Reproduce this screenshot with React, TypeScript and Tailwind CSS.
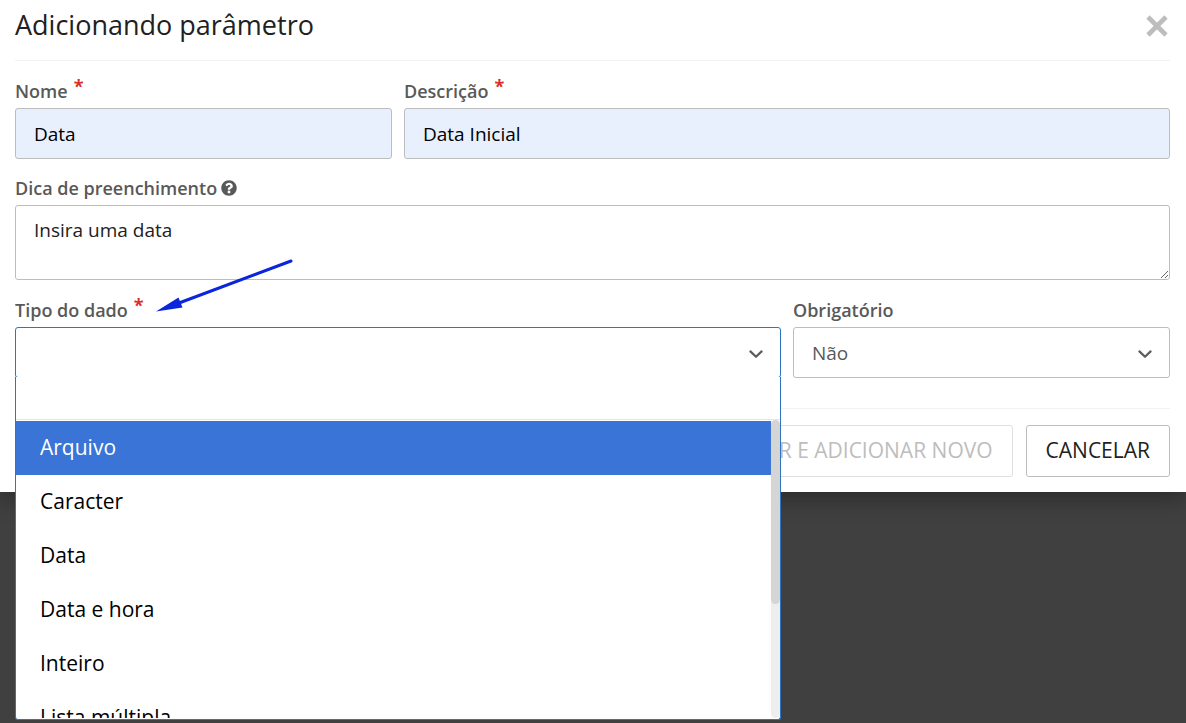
import { useState, type ReactNode } from "react";
import { FaQuestionCircle } from "react-icons/fa";

const dataTypes = [
  "Arquivo",
  "Caracter",
  "Data",
  "Data e hora",
  "Inteiro",
  "Lista múltipla",
];

function Required() {
  return (
    <span className="relative -top-[5px] ml-1.5 text-lg leading-none font-bold text-[#d9302c]">*</span>
  );
}

function Label({ htmlFor, children }: { htmlFor: string; children: ReactNode }) {
  return (
    <label
      htmlFor={htmlFor}
      className="flex h-[34px] items-center text-lg font-semibold text-[#595959]"
    >
      {children}
    </label>
  );
}

function Chevron() {
  return (
    <svg
      className="pointer-events-none absolute top-[22px] right-[17px] h-2.5 w-4"
      viewBox="0 0 16 10"
      fill="none"
      stroke="#5c5c5c"
      strokeWidth="2.2"
      strokeLinecap="round"
      strokeLinejoin="round"
      aria-hidden="true"
    >
      <path d="M2.4 2.4 8 7.8 13.6 2.4" />
    </svg>
  );
}

const fieldClass =
  "block h-[51px] w-full rounded-[3px] border border-[#bdbdbd] px-[18px] text-[19px] outline-none";

function DataTypeField() {
  const [open, setOpen] = useState(true);
  const [value, setValue] = useState("");
  const [filter, setFilter] = useState("");
  const items = dataTypes.filter((t) => t.toLowerCase().includes(filter.toLowerCase()));

  return (
    <div className="relative">
      <button
        id="tipo"
        type="button"
        role="combobox"
        aria-haspopup="listbox"
        aria-expanded={open}
        aria-controls="tipo-lista"
        onClick={() => setOpen(!open)}
        className="block h-[51px] w-full rounded-[3px] border border-[#2f74c0] bg-white px-[18px] text-left text-[19px] text-[#595959] outline-none"
      >
        {value}
      </button>
      <Chevron />
      {open && (
        <div className="absolute inset-x-0 top-[50px] z-10 rounded-b-[3px] border border-t-0 border-[#2f74c0] bg-white">
          <input
            type="text"
            aria-label="Filtrar"
            value={filter}
            onChange={(e) => setFilter(e.target.value)}
            className="block h-[43px] w-full border-b border-[#e6e6e6] px-6 text-[19px] outline-none"
          />
          <div className="flex h-[299px] pb-px">
            <ul
              id="tipo-lista"
              role="listbox"
              aria-label="Tipo do dado"
              className="flex-1 overflow-hidden pt-px"
            >
              {items.map((t, i) => (
                <li
                  key={t}
                  role="option"
                  aria-selected={i === 0}
                  onClick={() => {
                    setValue(t);
                    setOpen(false);
                  }}
                  className="flex h-[54px] cursor-pointer items-center px-6 text-[21px] text-black aria-selected:bg-[#3974d6] aria-selected:text-white"
                >
                  {t}
                </li>
              ))}
            </ul>
            <div className="w-[9px] rounded-full bg-[#eeeeee]">
              <div className="h-[184px] rounded-full bg-[#d5d5d5]" />
            </div>
          </div>
        </div>
      )}
    </div>
  );
}

function Arrow() {
  return (
    <svg
      className="pointer-events-none absolute bottom-[15px] left-[140px] h-[54px] w-[140px]"
      viewBox="0 0 140 54"
      aria-hidden="true"
    >
      <path d="M136 3 24 45" stroke="#0a25dc" strokeWidth="3" strokeLinecap="round" />
      <path d="M1 53.5 23.5 39.5 27.5 49.5Z" fill="#0a25dc" />
    </svg>
  );
}

export default function App() {
  return (
    <main className="min-h-screen bg-[#404040] font-['Open_Sans',sans-serif]">
      <div
        role="dialog"
        aria-labelledby="titulo"
        className="bg-white pr-4 pb-[15px] pl-[15px] shadow-[0_4px_24px_rgba(0,0,0,0.4)]"
      >
        <header className="flex h-[61px] items-start justify-between border-b border-[#f2f2f2] pt-1">
          <h1 id="titulo" className="text-[27px] leading-[42px] text-[#212121]">
            Adicionando parâmetro
          </h1>
          <button type="button" aria-label="Fechar" className="mt-[9px] p-px">
            <svg className="size-6" viewBox="0 0 24 24" stroke="#bdbdbd" strokeWidth="4.6" aria-hidden="true">
              <path d="M3 3 21 21M21 3 3 21" />
            </svg>
          </button>
        </header>

        <form className="pt-[13px]" onSubmit={(e) => e.preventDefault()}>
          <div className="grid grid-cols-12 gap-x-3">
            <div className="col-span-4">
              <Label htmlFor="nome">
                Nome
                <Required />
              </Label>
              <input id="nome" type="text" defaultValue="Data" className={`${fieldClass} bg-[#e8effd] text-black`} />
            </div>
            <div className="col-span-8">
              <Label htmlFor="descricao">
                Descrição
                <Required />
              </Label>
              <input
                id="descricao"
                type="text"
                defaultValue="Data Inicial"
                className={`${fieldClass} bg-[#e8effd] text-black`}
              />
            </div>
            <div className="col-span-12 pt-3">
              <Label htmlFor="dica">
                Dica de preenchimento
                <FaQuestionCircle className="ml-1 size-4" />
              </Label>
              <textarea
                id="dica"
                defaultValue="Insira uma data"
                className="block h-[75px] w-full rounded-[3px] border border-[#bdbdbd] px-[18px] py-2.5 text-[19px] text-[#212121] outline-none"
              />
            </div>
            <div className="col-span-8 pt-[13px]">
              <div className="relative">
                <Label htmlFor="tipo">
                  Tipo do dado
                  <Required />
                </Label>
                <Arrow />
              </div>
              <DataTypeField />
            </div>
            <div className="col-span-4 pt-[13px]">
              <Label htmlFor="obrigatorio">Obrigatório</Label>
              <div className="relative">
                <select
                  id="obrigatorio"
                  defaultValue="Não"
                  className={`${fieldClass} appearance-none bg-white pt-0.5 text-[#595959]`}
                >
                  <option>Não</option>
                </select>
                <Chevron />
              </div>
            </div>
          </div>

          <footer className="mt-[30px] flex justify-end gap-[13px] border-t border-[#f2f2f2] pt-4">
            <button
              type="button"
              disabled
              className="h-[52px] rounded-[3px] border border-[#dfdfdf] px-[19px] text-[21px] text-[#bdbdbd]"
            >
              SALVAR E ADICIONAR NOVO
            </button>
            <button
              type="button"
              className="h-[52px] rounded-[3px] border border-[#bdbdbd] px-[19px] text-[21px] text-[#212121]"
            >
              CANCELAR
            </button>
          </footer>
        </form>
      </div>
    </main>
  );
}
